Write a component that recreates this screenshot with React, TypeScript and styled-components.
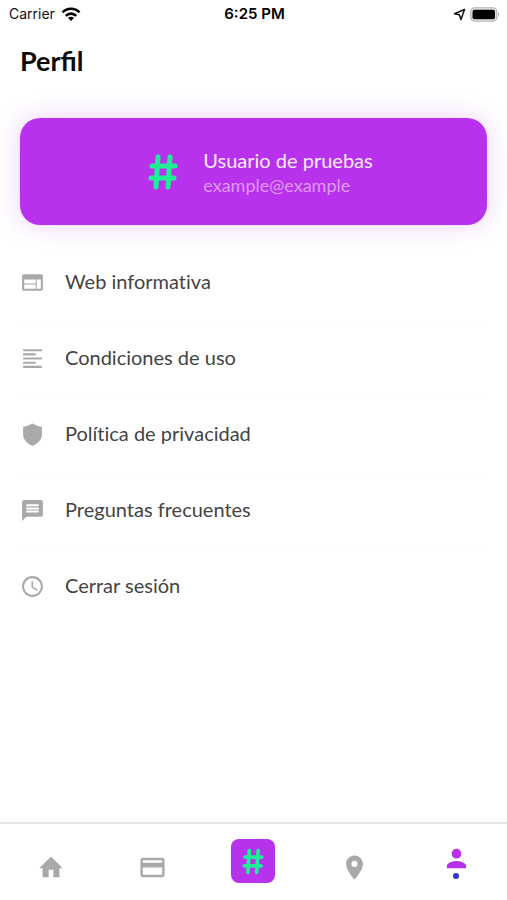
import React from "react";
import styled, { createGlobalStyle } from "styled-components";

const GlobalStyle = createGlobalStyle`
  * { box-sizing: border-box; }
  body { margin: 0; background: #fff; }
  button { font: inherit; border: 0; padding: 0; background: none; cursor: pointer; }
`;

const Screen = styled.div`
  min-height: 100vh;
  display: flex;
  flex-direction: column;
  background: #fff;
  font-family: Lato, "Noto Sans", sans-serif;
`;

const StatusBar = styled.header`
  display: grid;
  grid-template-columns: 1fr auto 1fr;
  align-items: center;
  height: 28px;
  padding: 0 7px 0 9px;
  font: 14px/28px Inter, sans-serif;
  color: #111;
`;

const StatusGroup = styled.div<{ $end?: boolean }>`
  display: flex;
  align-items: center;
  gap: ${(p) => (p.$end ? "4px" : "6px")};
  justify-content: ${(p) => (p.$end ? "flex-end" : "flex-start")};
`;

const Clock = styled.time`
  font-size: 15px;
  font-weight: 600;
  color: #000;
`;

const Main = styled.main`
  flex: 1;
  padding: 13px 20px 0;
`;

const Title = styled.h1`
  margin: 0;
  font-size: 27px;
  line-height: 40px;
  font-weight: 700;
  color: #0a0a0a;
`;

const ProfileCard = styled.section`
  display: flex;
  align-items: center;
  justify-content: center;
  gap: 25px;
  height: 107px;
  margin-top: 37px;
  padding-left: 14px;
  border-radius: 20px;
  background: #b832ee;
  box-shadow: 0 0 24px rgba(184, 50, 238, 0.24);
`;

const ProfileName = styled.p`
  margin: 0;
  font-size: 20px;
  line-height: 26px;
  color: #fdeaff;
`;

const ProfileMail = styled.p`
  margin: 0;
  font-size: 18px;
  line-height: 24px;
  color: #df98f6;
`;

const Menu = styled.ul`
  list-style: none;
  margin: 20px 0 0;
  padding: 0;
`;

const MenuItem = styled.li`
  border-bottom: 1px solid #fbfbfb;
  &:last-child { border-bottom: 0; }
`;

const MenuButton = styled.button`
  display: flex;
  align-items: center;
  gap: 20px;
  width: 100%;
  height: 75px;
  font-size: 20px;
  font-variant-ligatures: none;
  color: #444;
  text-align: left;
`;

const MenuLabel = styled.span`
  padding-bottom: 3px;
`;

const TabBar = styled.nav`
  display: grid;
  grid-template-columns: repeat(5, 1fr);
  height: 78px;
  border-top: 2px solid #e6e6e6;
`;

const Tab = styled.button<{ $active?: boolean }>`
  display: flex;
  flex-direction: column;
  align-items: center;
  justify-content: center;
  padding-top: ${(p) => (p.$active ? "0" : "10px")};
  padding-bottom: ${(p) => (p.$active ? "2px" : "0")};
  color: ${(p) => (p.$active ? "#b832ee" : "#a9a9a9")};
`;

const CenterTab = styled(Tab)`
  padding: 0 0 2px;
`;

const Badge = styled.span`
  display: grid;
  place-items: center;
  width: 44px;
  height: 44px;
  border-radius: 8px;
  background: #b832ee;
`;

const Dot = styled.span`
  width: 6px;
  height: 6px;
  border-radius: 50%;
  background: #2f35d0;
`;

const Glyph = styled.svg`
  display: block;
  flex: none;
`;

const paths = {
  web: "M20 4H4c-1.1 0-2 .9-2 2v12c0 1.1.9 2 2 2h16c1.1 0 2-.9 2-2V6c0-1.1-.9-2-2-2zm-5 14H4v-4h11v4zm0-5H4V9h11v4zm5 5h-4V9h4v9z",
  lines: "M15 15H3v2h12v-2zm0-8H3v2h12V7zM3 13h18v-2H3v2zm0 8h18v-2H3v2zM3 3v2h18V3H3z",
  shield: "M12 1.500C9.500 3 6.500 4.100 3.600 4.500Q3 4.600 3 5.300V12C3 17.500 7.500 20.800 11.200 22.500Q12 22.900 12.800 22.500C16.500 20.800 21 17.500 21 12V5.300Q21 4.600 20.400 4.500C17.500 4.100 14.500 3 12 1.500z",
  message: "M20 2H4c-1.1 0-2 .9-2 2v18l4-4h14c1.1 0 2-.9 2-2V4c0-1.1-.9-2-2-2zm-2 12H6v-2h12v2zm0-3H6V9h12v2zm0-3H6V6h12v2z",
  clock: "M11.99 2C6.47 2 2 6.48 2 12s4.47 10 9.99 10C17.52 22 22 17.52 22 12S17.52 2 11.99 2zM12 20c-4.42 0-8-3.58-8-8s3.58-8 8-8 8 3.58 8 8-3.58 8-8 8zm.5-13H11v6l5.25 3.15.75-1.23-4.5-2.67z",
  home: "M10 20.800v-6.500h4v6.500h5.200V13H22L12 3 2 13h2.800v7.800z",
  card: "M20 4H4c-1.11 0-2 .89-2 2v12c0 1.11.89 2 2 2h16c1.11 0 2-.89 2-2V6c0-1.11-.89-2-2-2zm0 14H4v-6h16v6zm0-10H4V6h16v2z",
  pin: "M12 2C8.13 2 5 5.13 5 9c0 5.25 7 13 7 13s7-7.75 7-13c0-3.87-3.13-7-7-7zm0 9.500a2.500 2.500 0 0 1 0-5 2.500 2.500 0 0 1 0 5z",
  person: "M12 12c2.21 0 4-1.79 4-4s-1.79-4-4-4-4 1.79-4 4 1.79 4 4 4zm0 2c-2.67 0-8 1.34-8 4v2h16v-2c0-2.66-5.33-4-8-4z",
};

type IconName = keyof typeof paths;

const Icon = ({ name, size = 25, color = "currentColor" }: { name: IconName; size?: number; color?: string }) => (
  <Glyph width={size} height={size} viewBox="0 0 24 24" fill={color} aria-hidden="true">
    <path d={paths[name]} />
  </Glyph>
);

const Hash = ({ width, height }: { width: number; height: number }) => (
  <Glyph width={width} height={height} viewBox="0 0 30 36" fill="none" stroke="#20ee96" strokeWidth="5" strokeLinecap="round" strokeLinejoin="round" aria-hidden="true">
    <path d="M10 3L8 33M22 3L20 33M4 12H27M3 24H26" />
  </Glyph>
);

const items: { icon: IconName; label: string }[] = [
  { icon: "web", label: "Web informativa" },
  { icon: "lines", label: "Condiciones de uso" },
  { icon: "shield", label: "Política de privacidad" },
  { icon: "message", label: "Preguntas frecuentes" },
  { icon: "clock", label: "Cerrar sesión" },
];

export default function App() {
  return (
    <Screen>
      <GlobalStyle />
      <StatusBar>
        <StatusGroup>
          <span>Carrier</span>
          <Glyph width="20" height="15" viewBox="0 0 20 15" fill="none" stroke="#000" strokeWidth="2.6" aria-hidden="true">
            <path d="M1.500 5.400C6.200.6 13.800.6 18.500 5.400M4.800 8.800C7.700 5.900 12.300 5.900 15.200 8.800" />
            <path d="M10 14L7 11Q10 8.500 13 11Z" fill="#000" stroke="none" />
          </Glyph>
        </StatusGroup>
        <Clock>6:25 PM</Clock>
        <StatusGroup $end>
          <Glyph width="13" height="13" viewBox="0 0 13 13" fill="none" stroke="#111" strokeWidth="1.5" strokeLinejoin="round" aria-hidden="true">
            <path d="M11.500 1.500L1.500 5.800L6.300 6.700L8 11.500Z" />
          </Glyph>
          <Glyph width="30" height="15" viewBox="0 0 30 15" aria-hidden="true">
            <rect x=".75" y=".75" width="26" height="13.5" rx="4" fill="#e2e2e2" stroke="#b4b4b4" strokeWidth="1.2" />
            <rect x="2.5" y="2.7" width="22.5" height="9.6" rx="2" fill="#000" />
            <path d="M28 5Q30 7.500 28 10Z" fill="#aaa" />
          </Glyph>
        </StatusGroup>
      </StatusBar>
      <Main>
        <Title>Perfil</Title>
        <ProfileCard>
          <Hash width={30} height={36} />
          <div>
            <ProfileName>Usuario de pruebas</ProfileName>
            <ProfileMail>example@example</ProfileMail>
          </div>
        </ProfileCard>
        <Menu>
          {items.map((item) => (
            <MenuItem key={item.label}>
              <MenuButton type="button">
                <Icon name={item.icon} color="#a9a9a9" />
                <MenuLabel>{item.label}</MenuLabel>
              </MenuButton>
            </MenuItem>
          ))}
        </Menu>
      </Main>
      <TabBar aria-label="Principal">
        <Tab type="button" aria-label="Inicio"><Icon name="home" size={28} /></Tab>
        <Tab type="button" aria-label="Tarjetas"><Icon name="card" size={29} /></Tab>
        <CenterTab type="button" aria-label="Etiquetas"><Badge><Hash width={22} height={27} /></Badge></CenterTab>
        <Tab type="button" aria-label="Lugares"><Icon name="pin" size={29} /></Tab>
        <Tab type="button" aria-label="Perfil" aria-current="page" $active><Icon name="person" size={29} /><Dot /></Tab>
      </TabBar>
    </Screen>
  );
}
